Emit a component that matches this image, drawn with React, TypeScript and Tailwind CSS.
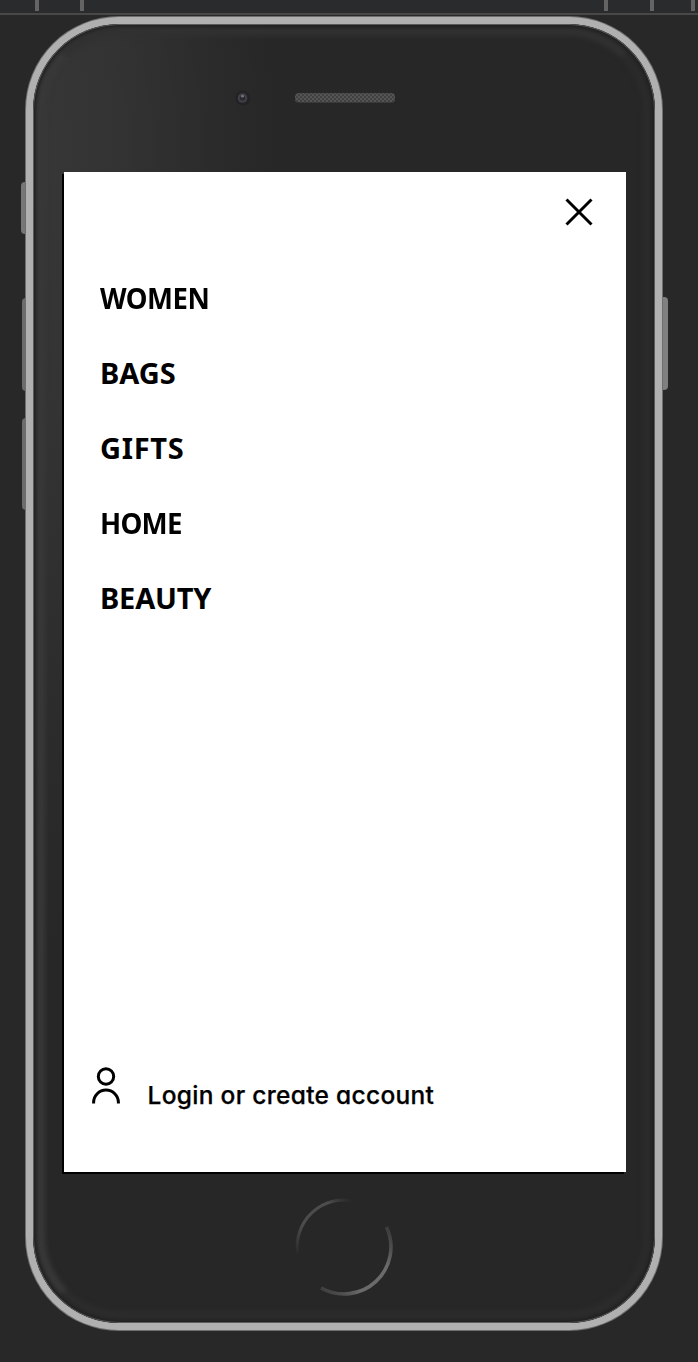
const ITEMS = [
  { label: "WOMEN", fit: "tracking-[-0.5px] scale-x-[0.948]" },
  { label: "BAGS", fit: "tracking-[0px]" },
  { label: "GIFTS", fit: "tracking-[0.7px]" },
  { label: "HOME", fit: "tracking-[-0.8px] scale-x-[0.955]" },
  { label: "BEAUTY", fit: "tracking-[-0.2px]" },
];

function Ruler() {
  return (
    <div className="flex h-[15px] shrink-0 border-b-2 border-[#484848] bg-[#292b2d]">
      <i className="ml-[35px] h-[11px] w-1 bg-[#646464]" />
      <i className="ml-[41px] h-[11px] w-1 bg-[#646464]" />
      <i className="ml-[520px] h-[11px] w-1 bg-[#646464]" />
      <i className="ml-[42px] h-[11px] w-1 bg-[#646464]" />
      <i className="ml-[37px] h-[11px] w-1 bg-[#646464]" />
    </div>
  );
}

function Speaker() {
  return (
    <svg className="ml-[42px]" width="102" height="12" viewBox="0 0 102 12">
      <defs>
        <pattern id="mesh" width="4" height="4" patternUnits="userSpaceOnUse">
          <rect width="4" height="4" fill="#414141" />
          <circle cx="1" cy="1" r="1" fill="#5a5a5a" />
          <circle cx="3" cy="3" r="1" fill="#5a5a5a" />
        </pattern>
      </defs>
      <rect x="1" y="1" width="100" height="9.5" rx="3.5" fill="url(#mesh)" />
    </svg>
  );
}

function Camera() {
  return (
    <svg className="ml-[201px]" width="18" height="18" viewBox="0 0 18 18">
      <circle cx="9" cy="9" r="7.5" fill="#232326" />
      <circle cx="8.5" cy="9" r="4.8" fill="#3f3f47" />
      <circle cx="8.5" cy="9" r="2.6" fill="#29292f" />
      <circle cx="8.5" cy="7.2" r="1.4" fill="#74747a" />
    </svg>
  );
}

function HomeButton() {
  return (
    <svg className="mx-auto mt-[24px]" width="102" height="102" viewBox="0 0 102 102" fill="none">
      <defs>
        <linearGradient id="arcA" x1="3" y1="55" x2="58" y2="3" gradientUnits="userSpaceOnUse">
          <stop offset="0" stopColor="#555" stopOpacity="0.1" />
          <stop offset="0.3" stopColor="#4c4c4c" />
          <stop offset="0.75" stopColor="#4c4c4c" />
          <stop offset="1" stopColor="#444" stopOpacity="0" />
        </linearGradient>
        <linearGradient id="arcB" x1="28" y1="94" x2="95" y2="29" gradientUnits="userSpaceOnUse">
          <stop offset="0" stopColor="#555" stopOpacity="0.5" />
          <stop offset="0.3" stopColor="#6a6a6a" />
          <stop offset="0.7" stopColor="#6a6a6a" />
          <stop offset="1" stopColor="#555" stopOpacity="0.4" />
        </linearGradient>
      </defs>
      <path d="M4.5 57A47 47 0 0 1 61 5" stroke="url(#arcA)" strokeWidth="3" />
      <path d="M28 92A47 47 0 0 0 93.5 31" stroke="url(#arcB)" strokeWidth="3.6" />
    </svg>
  );
}

function Screen() {
  return (
    <main className="ml-[31px] flex h-[1000px] w-[562px] flex-col bg-white text-black shadow-[-2px_2px_0_#000]">
      <button className="mt-[25px] mr-[31px] self-end" aria-label="Close">
        <svg width="32" height="30" viewBox="0 0 32 30" fill="none" stroke="#000" strokeWidth="3">
          <path d="M3.5 2.5 28.5 27.5M28.5 2.5 3.5 27.5" />
        </svg>
      </button>
      <nav className="mt-[33px] ml-9 flex flex-col items-start font-['Noto_Sans',sans-serif] text-[29px] font-bold">
        {ITEMS.map((item) => (
          <a key={item.label} className={`flex h-[75px] origin-left items-center ${item.fit}`}>
            {item.label}
          </a>
        ))}
      </nav>
      <div className="mt-auto mb-[59px] ml-[27px] flex items-start">
        <svg width="30" height="41" viewBox="0 0 30 41" fill="none" stroke="#000" strokeWidth="3">
          <circle cx="15" cy="10.5" r="7.7" />
          <path d="M2.6 37.5v-1a12.4 12.4 0 0 1 24.8 0v1" />
        </svg>
        <span className="mt-[11px] ml-[26.5px] font-['Inter',sans-serif] text-[24.5px] leading-9 font-medium tracking-[0.3px] whitespace-nowrap [font-feature-settings:'cv11'] [-webkit-text-stroke:0.25px_#000]">
          Login or create account
        </span>
      </div>
    </main>
  );
}

export default function App() {
  return (
    <div className="flex h-[1362px] w-[698px] flex-col overflow-hidden bg-[#282828]">
      <Ruler />
      <div className="relative mt-px ml-[25px] h-[1315px] w-[638px]">
        <i className="absolute top-[166px] -left-1 h-[52px] w-1.5 rounded-l-sm bg-[#777]" />
        <i className="absolute top-[282px] -left-[3px] h-[93px] w-1.5 rounded-l-sm bg-[#6c6c6c]" />
        <i className="absolute top-[402px] -left-[3px] h-[92px] w-1.5 rounded-l-sm bg-[#6c6c6c]" />
        <i className="absolute top-[281px] -right-[5px] h-[93px] w-1.5 rounded-r-sm bg-[#808080]" />
        <div className="relative h-full rounded-[94px] bg-[#6e6e6e] p-px">
          <div className="relative flex h-full flex-col overflow-hidden rounded-[93px] border-7 border-[#b0b0b0] bg-[#272727] bg-[radial-gradient(ellipse_240px_800px_at_0px_130px,#373737_0%,#333333_35%,#2b2b2b_75%,#272727_100%)]">
            <div className="absolute inset-[3px] rounded-[84px] border-[9px] border-t-[#313131] border-r-[#2b2b2b] border-b-[#2c2c2c] border-l-[#383838] blur-[2.5px]" />
            <div className="absolute inset-0 rounded-[86px] shadow-[inset_0_0_0_1px_#5a5a5a,inset_0_0_3px_3px_#222222]" />
            <div className="relative flex h-[148px] items-center">
              <Camera />
              <Speaker />
            </div>
            <div className="relative">
              <Screen />
            </div>
            <div className="relative">
              <HomeButton />
            </div>
          </div>
        </div>
      </div>
    </div>
  );
}
